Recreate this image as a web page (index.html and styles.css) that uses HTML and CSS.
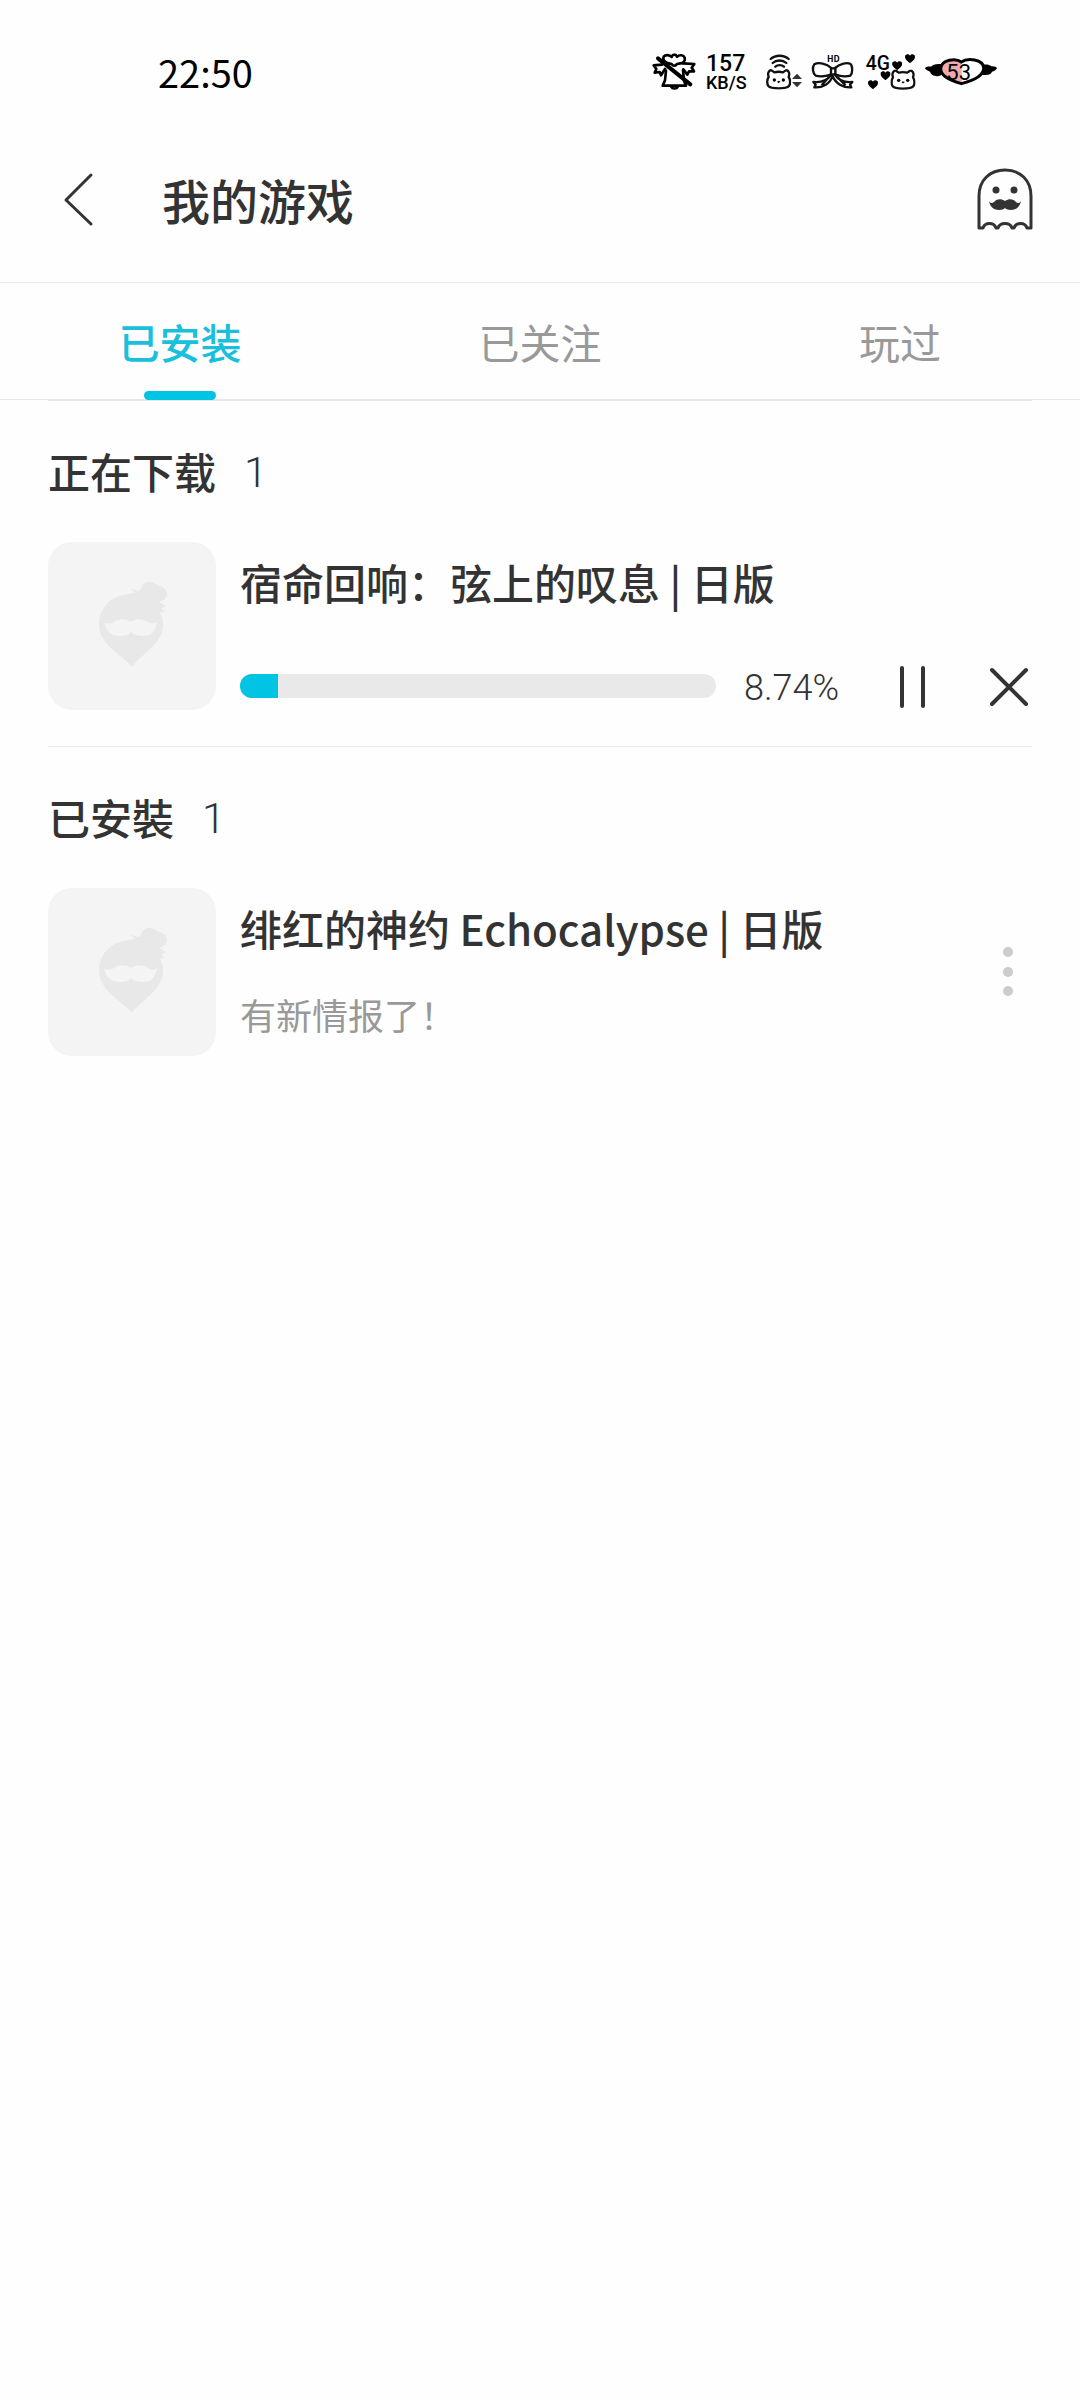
FILE: index.html
```html
<!DOCTYPE html>
<html lang="zh-CN">
<head>
    <meta charset="UTF-8">
    <meta name="viewport" content="width=device-width, initial-scale=1.0">
    <title>我的游戏</title>

    <link rel="stylesheet" href="styles.css">
</head>
<body>
    <!-- Shared shapes -->
    <svg class="sprite" aria-hidden="true">
        <symbol id="mascot" viewBox="0 0 168 168">
            <path fill="#e8e8e8" d="M84 125C78 117 68 112 60 103C54 96 51 90 51 82C51 68 61 56 75 53C80 52 85 51 87 51L83 47L91 49L93 47C94 42 98 39 103 40C107 41 109 43 111 44C115 44 119 48 119 52C119 55 117 56 116 58L111 60L118 64L113 67L117 69L112 71C114 74 115 78 115 83C115 91 111 98 106 103C98 112 89 117 84 125Z"/>
            <path fill="#f4f4f4" d="M83 80C77 76 70 77 66 80C63 82 58 82 56 80C58 90 64 94 72 94C77 94 81 93 83 90C86 93 90 94 95 94C103 94 107 90 109 80C106 82 103 82 100 80C95 77 88 76 83 80Z"/>
        </symbol>
        <symbol id="heart" viewBox="0 0 30 28">
            <path d="M15 28C12 23 0 18 0 8C0 1 10 -2 15 5C20 -2 30 1 30 8C30 18 18 23 15 28Z"/>
        </symbol>
        <symbol id="cat" viewBox="0 0 76 62">
            <path fill="#fff" stroke="#111" stroke-width="7" stroke-linejoin="round" d="M8 24C3 11 11 1 18 5L25 10C33 8 43 8 51 10L58 5C65 1 73 11 68 24C73 31 74 44 69 51C63 58 50 58 38 58C26 58 13 58 7 51C2 44 3 31 8 24Z"/>
            <circle cx="25" cy="33" r="5"/>
            <circle cx="52" cy="33" r="5"/>
            <path fill="none" stroke="#111" stroke-width="4" d="M35 37L38 40L42 37"/>
        </symbol>
    </svg>

    <div class="status-bar">
        <time class="clock">22:50</time>
        <div class="status-icons">
            <svg width="44" height="36" viewBox="36 42 132 108" fill="none" stroke="#000" stroke-width="8" stroke-linejoin="round" stroke-linecap="round">
                <path d="M86 70C74 68 67 58 71 50C77 43 89 44 95 51C97 42 108 42 111 50C119 43 131 45 134 53C137 62 130 70 121 70L111 72C106 80 98 78 95 72Z"/>
                <path d="M66 74L41 76L49 87L44 98L59 96L63 106L75 87M128 70L163 72L155 83L162 94L147 94L142 104L130 88"/>
                <path d="M78 92L75 121L68 137H138L132 122L129 90M94 141C97 147 110 147 113 141"/>
                <path stroke-width="12" d="M54 55L151 133"/>
            </svg>
            <div class="net-speed">
                <span class="net-value">157</span>
                <span class="net-unit">KB/S</span>
            </div>
            <svg width="37" height="36" viewBox="381 42 111 108">
                <g fill="none" stroke="#111" stroke-width="7" stroke-linecap="round">
                    <path d="M398 57C412 44 438 44 452 57"/>
                    <path d="M404 69C415 59 434 59 445 69"/>
                    <path d="M412 80C419 74 431 74 438 80"/>
                </g>
                <use href="#cat" x="384" y="87" width="76" height="62"/>
                <path fill="#333" d="M462 117L477 101L492 117ZM462 126H492L477 142Z"/>
            </svg>
            <svg width="44" height="36" viewBox="-24 42 132 108">
                <g fill="none" stroke="#111" stroke-width="7" stroke-linejoin="round">
                    <path d="M34 84C20 71 -4 65 -17 73C-24 82 -22 100 -13 107C2 111 23 108 34 103Z"/>
                    <path d="M45 84C60 71 82 65 93 73C98 82 98 100 91 107C78 111 57 108 45 103Z"/>
                    <path d="M34 104C22 122 0 128 -20 126L-13 134L-17 142C8 144 31 130 38 108C46 130 70 144 94 142L90 134L97 126C77 128 56 122 45 104M25 113L5 136M54 113L77 136"/>
                    <path fill="#fff" d="M33 85H46V103H33Z"/>
                </g>
                <text class="icon-hd" x="21" y="67">HD</text>
            </svg>
            <svg width="49" height="36" viewBox="138 42 147 108">
                <text class="icon-4g" x="137" y="91">4G</text>
                <use href="#heart" x="255" y="42" width="30" height="28"/>
                <use href="#heart" x="216" y="63" width="31" height="28"/>
                <use href="#heart" x="181" y="93" width="31" height="28"/>
                <use href="#heart" x="143" y="120" width="32" height="28"/>
                <use href="#cat" x="211" y="88" width="76" height="62"/>
            </svg>
            <svg width="72" height="36" viewBox="315 42 216 108">
                <path d="M366 73C350 70 337 75 333 80C325 79 316 81 315 85C318 90 324 93 330 95C332 102 339 108 346 107C354 111 364 106 366 102ZM482 75C495 72 509 73 514 79C522 78 530 81 531 85C528 90 522 94 516 95C514 101 507 105 501 104C494 107 484 104 480 101Z"/>
                <path fill="#fff" d="M424 66C408 54 364 58 362 86C362 109 396 123 424 131C455 123 491 108 491 84C490 57 442 53 424 66Z"/>
                <path fill="#f0a9ae" d="M424 66C408 54 364 58 362 86C362 109 396 123 426 131Z"/>
                <path fill="none" stroke="#000" stroke-width="9" d="M424 66C408 54 364 58 362 86C362 109 396 123 424 131C455 123 491 108 491 84C490 57 442 53 424 66Z"/>
                <text class="icon-battery" x="379" y="120">53</text>
            </svg>
        </div>
    </div>

    <header class="header">
        <button type="button" class="icon-btn back-btn" aria-label="返回">
            <svg width="32" height="56" viewBox="0 0 32 56" fill="none" stroke="#333" stroke-width="3" stroke-linecap="round" stroke-linejoin="round">
                <path d="M29 4L4 29L29 53"/>
            </svg>
        </button>
        <h1>我的游戏</h1>
        <button type="button" class="icon-btn" aria-label="个人中心">
            <svg width="56" height="62" viewBox="0 0 56 62">
                <path fill="none" stroke="#333" stroke-width="3" stroke-linejoin="round" d="M2 28C2 12 13 2 28 2C43 2 54 12 54 28V60H50C48 54 39 54 37 60H35C33 54 23 54 21 60H19C17 54 8 54 6 60H2Z"/>
                <circle cx="19" cy="22" r="3.5" fill="#333"/>
                <circle cx="37" cy="22" r="3.5" fill="#333"/>
                <path fill="#333" d="M28 33C24 30 19 31 17 34C15 36 13 35 12 33C13 39 17 42 22 42C25 42 27 41 28 40C29 41 31 42 34 42C39 42 43 39 44 33C43 35 41 36 39 34C37 31 32 30 28 33Z"/>
            </svg>
        </button>
    </header>

    <nav class="tabs">
        <a href="#installed" class="tab active">已安装</a>
        <a href="#followed" class="tab">已关注</a>
        <a href="#played" class="tab">玩过</a>
    </nav>

    <main class="content">
        <section class="game-section">
            <h2>正在下载 <span class="count">1</span></h2>
            <div class="game">
                <svg class="cover" viewBox="0 0 168 168"><use href="#mascot"/></svg>
                <div class="info">
                    <h3>宿命回响：弦上的叹息 | 日版</h3>
                    <div class="download">
                        <div class="progress" role="progressbar" aria-valuenow="8" aria-valuemin="0" aria-valuemax="100">
                            <div class="progress-fill" style="width: 8%"></div>
                        </div>
                        <span class="percent">8.74%</span>
                        <div class="actions">
                            <button type="button" class="icon-btn" aria-label="暂停">
                                <svg width="48" height="48" viewBox="0 0 48 48" stroke="#333" stroke-width="4" stroke-linecap="round">
                                    <path d="M14 6V44M35 6V44"/>
                                </svg>
                            </button>
                            <button type="button" class="icon-btn" aria-label="取消">
                                <svg width="48" height="48" viewBox="0 0 48 48" stroke="#333" stroke-width="4" stroke-linecap="round">
                                    <path d="M8 8L42 42M42 8L8 42"/>
                                </svg>
                            </button>
                        </div>
                    </div>
                </div>
            </div>
        </section>

        <section class="game-section">
            <h2>已安裝 <span class="count">1</span></h2>
            <div class="game">
                <svg class="cover" viewBox="0 0 168 168"><use href="#mascot"/></svg>
                <div class="info">
                    <h3>绯红的神约 Echocalypse | 日版</h3>
                    <p class="news">有新情报了！</p>
                </div>
                <button type="button" class="icon-btn" aria-label="更多">
                    <svg width="48" height="48" viewBox="0 0 48 48" fill="#ccc">
                        <circle cx="24" cy="4" r="5"/>
                        <circle cx="24" cy="24" r="5"/>
                        <circle cx="24" cy="43" r="5"/>
                    </svg>
                </button>
            </div>
        </section>
    </main>
</body>
</html>
```
FILE: styles.css
```css
*{
    margin: 0;
    padding: 0;
    box-sizing: border-box;
}

body{
    min-height: 100vh;
    background-color: #fefefe;
    color: #333;
    font-family: "Noto Sans CJK SC", sans-serif;
}

svg{
    display: block;
    overflow: visible;
}

.sprite{
    position: absolute;
    width: 0;
    height: 0;
}

.icon-btn{
    border: none;
    background: none;
    cursor: pointer;
}

/* status bar */
.status-bar{
    display: flex;
    justify-content: space-between;
    align-items: center;
    height: 120px;
    padding: 24px 83px 0 158px;
    color: #000;
}

.clock{
    padding-bottom: 2px;
    font-size: 38px;
    font-weight: 400;
}

.status-icons{
    display: flex;
    align-items: center;
    gap: 10px;
}

.net-speed{
    display: flex;
    flex-direction: column;
    width: 49px;
    padding-top: 2px;
    font-family: Roboto, sans-serif;
    font-weight: 500;
}

.net-value{
    font-size: 23px;
    line-height: 20px;
}

.net-unit{
    font-size: 18px;
    line-height: 18px;
}

.icon-hd{
    font-size: 26px;
    font-weight: 700;
}

.icon-4g{
    font-family: Roboto, sans-serif;
    font-size: 58px;
    font-weight: 500;
}

.icon-battery{
    font-family: Roboto, sans-serif;
    font-size: 66px;
}

/* header */
.header{
    display: flex;
    align-items: center;
    height: 163px;
    padding: 0 47px 4px 62px;
    border-bottom: 1px solid #e8e8e8;
}

.header h1{
    flex: 1;
    font-size: 48px;
    font-weight: 500;
}

.back-btn{
    width: 100px;
}

/* tabs */
.tabs{
    display: flex;
    border-bottom: 1px solid #e8e8e8;
}

.tab{
    display: flex;
    flex: 1;
    flex-direction: column;
    align-items: center;
    color: #999;
    font-size: 41px;
    line-height: 116px;
    text-decoration: none;
}

.tab.active{
    color: #19bfdb;
    font-weight: 500;
}

.tab.active::after{
    content: "";
    width: 72px;
    height: 9px;
    margin-top: -8px;
    margin-bottom: -1px;
    border-radius: 5px;
    background-color: #00c4e4;
}

/* game list */
.content{
    padding: 0 48px;
}

.game-section{
    padding-bottom: 36px;
    border-top: 1px solid #e8e8e8;
}

.game-section h2{
    display: flex;
    gap: 28px;
    padding: 40px 0 41px;
    font-size: 42px;
    font-weight: 500;
    line-height: 60px;
}

.count{
    padding-top: 3px;
    color: #333;
    font-family: Roboto, sans-serif;
    font-weight: 300;
    line-height: 57px;
}

.game{
    display: flex;
    align-items: center;
    gap: 24px;
}

.cover{
    width: 168px;
    height: 168px;
    border-radius: 24px;
    background-color: #f4f4f4;
}

.info{
    flex: 1;
    height: 168px;
    padding-top: 10px;
}

.info h3{
    font-size: 42px;
    font-weight: 500;
    line-height: 60px;
}

.news{
    margin-top: 32px;
    color: #999;
    font-size: 36px;
    font-weight: 400;
    line-height: 48px;
}

.download{
    display: flex;
    align-items: center;
    height: 48px;
    margin-top: 50px;
}

.progress{
    flex: 1;
    height: 24px;
    border-radius: 12px;
    background-color: #e9e9e9;
    overflow: hidden;
}

.progress-fill{
    height: 100%;
    background-color: #00c4e4;
}

.percent{
    width: 172px;
    padding: 4px 0 0 28px;
    font-family: Roboto, sans-serif;
    font-size: 36px;
    font-weight: 300;
    line-height: 48px;
}

.actions{
    display: flex;
    gap: 48px;
}
```
